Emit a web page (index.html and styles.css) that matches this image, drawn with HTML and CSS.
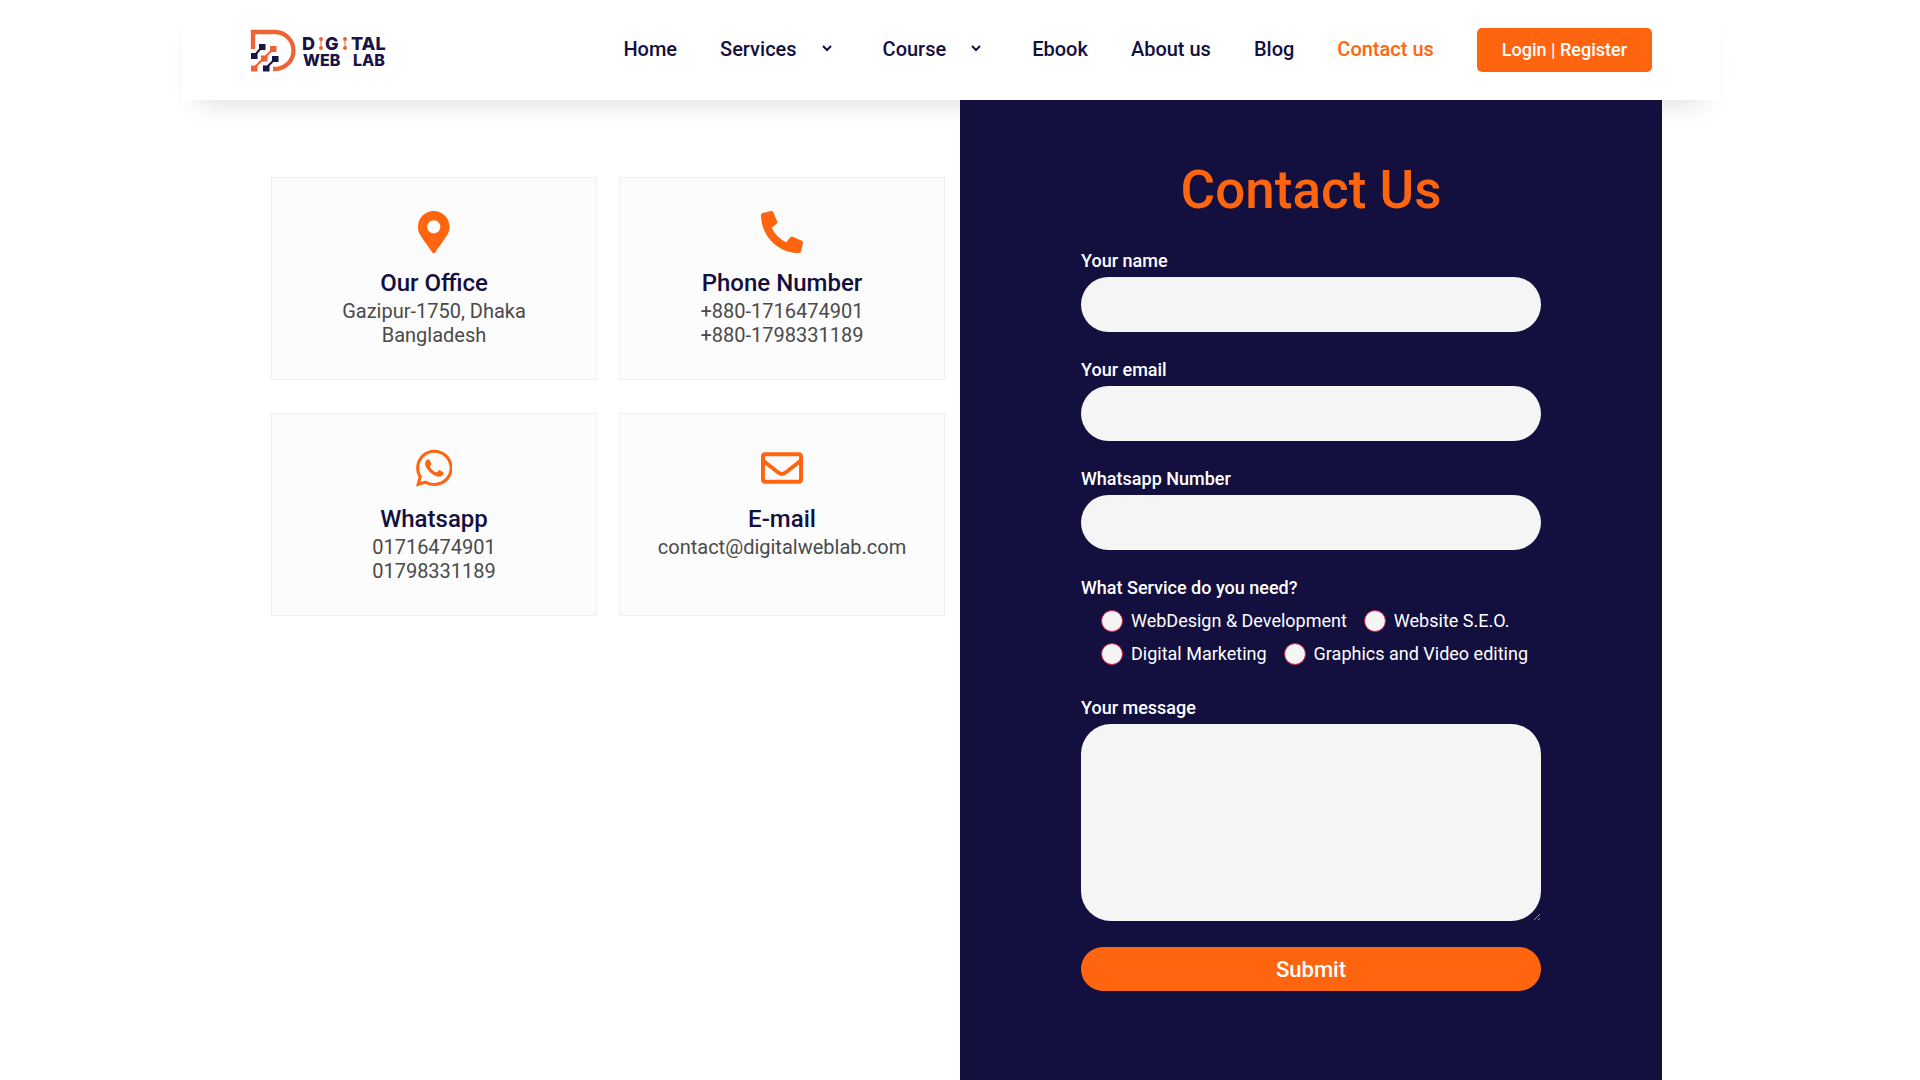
FILE: index.html
```html
<!DOCTYPE html>
<html lang="en">
<head>
<meta charset="utf-8">
<meta name="viewport" content="width=device-width, initial-scale=1">
<title>Contact Us</title>
<link rel="stylesheet" href="styles.css">
</head>
<body>
<div class="header-wrap">
  <header class="site-header">
    <a class="logo" href="#" aria-label="Digital Web Lab">
      <svg width="140" height="45" viewBox="0 0 140 45">
        <path d="M3 21V4H25a18.500 18.500 0 0 1 0 37H23" fill="none" stroke="#ee6335" stroke-width="4.300"/>
        <g stroke-width="2">
          <path d="M4 28L12 19" stroke="#1a1446"/>
          <path d="M4 40L14 30L23 21" stroke="#ee6335"/>
          <path d="M16 40L25 31" stroke="#1a1446"/>
        </g>
        <path d="M9 16h6.500v6H9zM1 25h6.500v6H1zM22 28h6.500v6h-6.500zM13 37.500h6.500v6h-6.500z" fill="#1a1446"/>
        <path d="M20 18h6.500v6h-6.500zM11 27.500h6.500v6h-6.500zM1 37.500h6.500v6H1z" fill="#ee6335"/>
        <g fill="#ee6335">
          <circle cx="71" cy="11" r="2"/><circle cx="71" cy="20" r="2"/>
          <circle cx="95" cy="11" r="2"/><circle cx="95" cy="20" r="2"/>
          <path d="M70.500 11h1v9h-1zM94.500 11h1v9h-1z"/>
        </g>
        <g class="logo-text">
          <text class="logo-top" x="52" y="22">D</text>
          <text class="logo-top" x="75" y="22">G</text>
          <text class="logo-top" x="101" y="22">TAL</text>
          <text class="logo-bottom" x="53" y="38">WEB</text>
          <text class="logo-bottom" x="103" y="38">LAB</text>
        </g>
      </svg>
    </a>
    <nav class="nav">
      <a href="#">Home</a>
      <a class="has-menu" href="#">Services
        <svg class="chevron" width="12" height="8" viewBox="0 0 12 8"><path d="M2 1l4 4 4-4"/></svg>
      </a>
      <a class="has-menu" href="#">Course
        <svg class="chevron" width="12" height="8" viewBox="0 0 12 8"><path d="M2 1l4 4 4-4"/></svg>
      </a>
      <a href="#">Ebook</a>
      <a href="#">About us</a>
      <a href="#">Blog</a>
      <a class="active" href="#">Contact us</a>
      <button class="login" type="button">Login | Register</button>
    </nav>
  </header>
</div>

<main class="content">
  <section class="cards">
    <article class="card">
      <svg class="icon" viewBox="0 0 384 512"><path d="M172.268 501.670C26.970 291.031 0 269.413 0 192 0 85.961 85.961 0 192 0s192 85.961 192 192c0 77.413-26.970 99.031-172.268 309.670-9.535 13.774-29.930 13.773-39.464 0zM192 272c44.183 0 80-35.817 80-80s-35.817-80-80-80-80 35.817-80 80 35.817 80 80 80z"/></svg>
      <h2>Our Office</h2>
      <p>Gazipur-1750, Dhaka<br>Bangladesh</p>
    </article>
    <article class="card">
      <svg class="icon" viewBox="0 0 512 512"><path d="M497.390 361.800l-112-48a24 24 0 0 0-28 6.900l-49.600 60.600A370.660 370.660 0 0 1 130.600 204.110l60.600-49.600a23.940 23.940 0 0 0 6.900-28l-48-112A24.160 24.160 0 0 0 122.600.610l-104 24A24 24 0 0 0 0 48c0 256.500 207.900 464 464 464a24 24 0 0 0 23.400-18.600l24-104a24.290 24.290 0 0 0-14.010-27.600z"/></svg>
      <h2>Phone Number</h2>
      <p>+880-1716474901<br>+880-1798331189</p>
    </article>
    <article class="card">
      <svg class="icon" viewBox="0 0 448 512"><path d="M380.900 97.100C339 55.100 283.200 32 223.900 32c-122.400 0-222 99.600-222 222 0 39.100 10.200 77.300 29.600 111L0 480l117.700-30.900c32.400 17.700 68.900 27 106.100 27h.1c122.300 0 224.100-99.600 224.100-222 0-59.300-25.200-115-67.100-157zm-157 341.600c-33.200 0-65.700-8.900-94-25.700l-6.700-4-69.800 18.300L72 359.200l-4.400-7c-18.500-29.400-28.200-63.300-28.200-98.200 0-101.700 82.800-184.500 184.600-184.500 49.300 0 95.600 19.200 130.400 54.100 34.800 34.900 56.200 81.200 56.100 130.500 0 101.800-84.900 184.600-186.600 184.600zm101.200-138.200c-5.500-2.800-32.800-16.200-37.900-18-5.100-1.900-8.800-2.800-12.500 2.800-3.700 5.600-14.300 18-17.600 21.800-3.200 3.700-6.500 4.200-12 1.400-32.600-16.300-54-29.100-75.500-66-5.700-9.800 5.700-9.100 16.300-30.300 1.800-3.700.9-6.900-.5-9.700-1.400-2.800-12.500-30.100-17.100-41.200-4.500-10.800-9.100-9.300-12.500-9.500-3.200-.2-6.900-.2-10.600-.2-3.700 0-9.700 1.400-14.800 6.900-5.100 5.600-19.400 19-19.400 46.300 0 27.300 19.900 53.700 22.600 57.400 2.800 3.700 39.100 59.700 94.800 83.800 35.200 15.200 49 16.500 66.600 13.900 10.700-1.600 32.800-13.400 37.400-26.400 4.600-13 4.600-24.100 3.200-26.400-1.300-2.500-5-3.900-10.500-6.600z"/></svg>
      <h2>Whatsapp</h2>
      <p>01716474901<br>01798331189</p>
    </article>
    <article class="card">
      <svg class="icon" viewBox="0 0 512 512"><path d="M464 64H48C21.490 64 0 85.490 0 112v288c0 26.510 21.490 48 48 48h416c26.510 0 48-21.490 48-48V112c0-26.510-21.490-48-48-48zm0 48v40.805c-22.422 18.259-58.168 46.651-134.587 106.490-16.841 13.247-50.201 45.072-73.413 44.701-23.208.375-56.579-31.459-73.413-44.701C106.180 199.465 70.425 171.067 48 152.805V112h416zM48 400V214.398c22.914 18.251 55.409 43.862 104.938 82.646 21.857 17.205 60.134 55.186 103.062 54.955 42.717.231 80.509-37.199 103.053-54.947 49.528-38.783 82.032-64.401 104.947-82.653V400H48z"/></svg>
      <h2>E-mail</h2>
      <p>contact@digitalweblab.com</p>
    </article>
  </section>

  <section class="panel">
    <h1>Contact Us</h1>
    <form class="form">
      <div class="field">
        <label for="name">Your name</label>
        <input id="name" type="text">
      </div>
      <div class="field">
        <label for="email">Your email</label>
        <input id="email" type="email">
      </div>
      <div class="field">
        <label for="phone">Whatsapp Number</label>
        <input id="phone" type="tel">
      </div>
      <fieldset class="field">
        <legend>What Service do you need?</legend>
        <div class="options">
          <label><input type="radio" name="service">WebDesign &amp; Development</label>
          <label><input type="radio" name="service">Website S.E.O.</label>
          <label><input type="radio" name="service">Digital Marketing</label>
          <label><input type="radio" name="service">Graphics and Video editing</label>
        </div>
      </fieldset>
      <div class="field">
        <label for="message">Your message</label>
        <textarea id="message"></textarea>
      </div>
      <button class="submit" type="submit">Submit</button>
    </form>
  </section>
</main>
</body>
</html>
```
FILE: styles.css
```css
:root {
  --navy: #130f3f;
  --orange: #ff650f;
  --field: #f5f5f5;
}

* {
  box-sizing: border-box;
}

body {
  margin: 0;
  min-height: 100vh;
  display: flex;
  flex-direction: column;
  background: #fff;
  font-family: Roboto, "Liberation Sans", sans-serif;
  color: var(--navy);
  overflow-x: hidden;
}

h1, h2, p {
  margin: 0;
}

/* Header */
.header-wrap {
  padding-right: 18px;
}

.site-header {
  max-width: 1538px;
  height: 100px;
  margin: 0 auto;
  padding: 0 68px;
  display: flex;
  align-items: center;
  justify-content: space-between;
  background: #fff;
  box-shadow: 0 18px 28px -16px rgba(0, 0, 0, 0.15);
}

.logo svg {
  display: block;
}

.logo-text {
  fill: #1a1446;
  font-family: Inter, sans-serif;
  font-weight: 800;
}

.logo-top {
  font-size: 18px;
}

.logo-bottom {
  font-size: 16px;
}

.nav {
  display: flex;
  align-items: center;
  gap: 43px;
  font-size: 20px;
  font-weight: 500;
  line-height: 24px;
}

.nav a {
  padding-bottom: 2px;
  color: var(--navy);
  text-decoration: none;
}

.nav .active {
  color: var(--orange);
}

.nav .has-menu {
  display: flex;
  align-items: center;
  gap: 24px;
  padding-right: 7px;
}

.chevron {
  fill: none;
  stroke: currentColor;
  stroke-width: 2;
}

button {
  border: 0;
  background: var(--orange);
  color: #fff;
  font-family: inherit;
  font-weight: 500;
  cursor: pointer;
}

.login {
  height: 44px;
  padding: 0 25px 2px;
  border-radius: 5px;
  font-size: 18px;
}

/* Page body */
.content {
  flex: 1;
  width: 100%;
  max-width: 1404px;
  margin: 0 auto;
  display: grid;
  grid-template-columns: 1fr 1fr;
}

.cards {
  display: grid;
  grid-template-columns: 1fr 1fr;
  align-content: start;
  gap: 33px 22px;
  padding: 77px 15px 0 13px;
}

.card {
  min-height: 203px;
  padding: 33px 16px 30px;
  display: flex;
  flex-direction: column;
  align-items: center;
  border: 1px solid #f0f0f0;
  background: #fcfcfc;
  text-align: center;
}

.icon {
  height: 42px;
  fill: var(--orange);
}

.card h2 {
  margin-top: 14px;
  font-size: 24px;
  font-weight: 500;
  line-height: 32px;
}

.card p {
  color: #4a4a4a;
  font-size: 20px;
  line-height: 24px;
}

/* Contact form */
.panel {
  padding: 58px 121px;
  background: var(--navy);
  color: #fff;
}

.panel h1 {
  color: var(--orange);
  font-size: 53px;
  font-weight: 500;
  line-height: 64px;
  text-align: center;
}

.form {
  margin-top: 27px;
  display: flex;
  flex-direction: column;
  gap: 26px;
  font-size: 18px;
  line-height: 24px;
}

.field {
  min-width: 0;
  margin: 0;
  padding: 0;
  border: 0;
  display: flex;
  flex-direction: column;
  gap: 4px;
}

.field > label,
legend {
  padding: 0;
  font-weight: 500;
}

.field > input,
textarea {
  width: 100%;
  height: 55px;
  padding: 12px 24px;
  border: 0;
  border-radius: 30px;
  background: var(--field);
  font: inherit;
}

textarea {
  display: block;
  height: 197px;
  resize: vertical;
}

.options {
  display: flex;
  flex-wrap: wrap;
  column-gap: 17px;
  padding: 4px 0 0 20px;
}

.options label {
  height: 33px;
  display: flex;
  align-items: center;
  gap: 8px;
}

.options input {
  appearance: none;
  width: 22px;
  height: 22px;
  margin: 0;
  border: 1px solid #d81b45;
  border-radius: 50%;
  background: var(--field);
}

.options input:checked {
  background: var(--orange);
}

.submit {
  height: 44px;
  border-radius: 22px;
  font-size: 22px;
}
```
